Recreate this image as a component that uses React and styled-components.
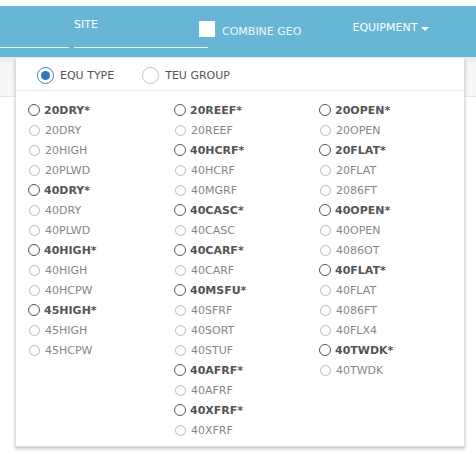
import React from "react"
import styled, { createGlobalStyle } from "styled-components"

const columns = [
  [
    "20DRY*", "20DRY", "20HIGH", "20PLWD", "40DRY*", "40DRY", "40PLWD",
    "40HIGH*", "40HIGH", "40HCPW", "45HIGH*", "45HIGH", "45HCPW",
  ],
  [
    "20REEF*", "20REEF", "40HCRF*", "40HCRF", "40MGRF", "40CASC*", "40CASC",
    "40CARF*", "40CARF", "40MSFU*", "40SFRF", "40SORT", "40STUF", "40AFRF*",
    "40AFRF", "40XFRF*", "40XFRF",
  ],
  [
    "20OPEN*", "20OPEN", "20FLAT*", "20FLAT", "2086FT", "40OPEN*", "40OPEN",
    "4086OT", "40FLAT*", "40FLAT", "4086FT", "40FLX4", "40TWDK*", "40TWDK",
  ],
]

const App = () => (
  <>
    <GlobalStyle />
    <Page>
      <TopBar>
        <Field width="69px" />
        <Field width="134px">
          <FieldLabel>SITE</FieldLabel>
        </Field>
        <CheckWrap>
          <CheckBox />
          <CheckLabel>COMBINE GEO</CheckLabel>
        </CheckWrap>
        <MenuTrigger>
          EQUIPMENT
          <Caret />
        </MenuTrigger>
      </TopBar>
      <SubStrip />

      <Dropdown>
        <ModeRow>
          <ModeOption>
            <BigRadio checked />
            EQU TYPE
          </ModeOption>
          <ModeOption>
            <BigRadio />
            TEU GROUP
          </ModeOption>
        </ModeRow>
        <TypeGrid>
          {columns.map((col, i) => (
            <Column key={i}>
              {col.map((name) => {
                const group = name.endsWith("*")
                return (
                  <Item key={name} group={group}>
                    <SmallRadio group={group} />
                    {name}
                  </Item>
                )
              })}
            </Column>
          ))}
        </TypeGrid>
      </Dropdown>
    </Page>
  </>
)
export default App

//styled-components
const GlobalStyle = createGlobalStyle`
  html, body {
    margin: 0;
    padding: 0;
    background: #fff;
  }
  body {
    font-family: "DejaVu Sans", Verdana, sans-serif;
    font-size: 11px;
  }
`
const Page = styled.div`
  position: relative;
  width: 476px;
  height: 454px;
  overflow: hidden;
  padding-top: 6px;
  box-sizing: border-box;
`
const TopBar = styled.div`
  display: flex;
  align-items: stretch;
  height: 51px;
  background: #68b6d6;
  box-shadow: 0 1px 1px rgba(0, 0, 0, 0.12);
  color: #fff;
`
const Field = styled.div`
  position: relative;
  width: ${(p) => p.width};
  margin-right: 5px;
  border-bottom: 1px solid #e9f5fb;
  margin-bottom: 9px;
  flex-shrink: 0;
`
const FieldLabel = styled.span`
  display: block;
  padding-top: 12px;
  line-height: 13px;
`
const CheckWrap = styled.div`
  display: flex;
  align-items: flex-start;
  gap: 7px;
  margin-left: -14px;
  padding-top: 15px;
`
const CheckBox = styled.span`
  width: 16px;
  height: 16px;
  background: #fff;
`
const CheckLabel = styled.span`
  color: #eef7fb;
  line-height: 13px;
  margin-top: 4px;
`
const MenuTrigger = styled.div`
  display: flex;
  align-items: flex-start;
  gap: 4px;
  margin-left: 51px;
  padding-top: 15px;
  line-height: 13px;
`
const Caret = styled.span`
  margin-top: 6px;
  width: 0;
  height: 0;
  border-left: 4px solid transparent;
  border-right: 4px solid transparent;
  border-top: 4px solid #fff;
`
const SubStrip = styled.div`
  height: 39px;
  background: linear-gradient(#e9e9e9, #f6f6f6 8px, #f8f8f8);
  border-bottom: 1px solid #e4e4e4;
`
const Dropdown = styled.div`
  position: absolute;
  left: 15px;
  top: 58px;
  width: 450px;
  height: 389px;
  box-sizing: border-box;
  background: #fff;
  border: 1px solid #dedede;
  border-top: none;
  box-shadow: 0 2px 3px rgba(0, 0, 0, 0.22);
`
const ModeRow = styled.div`
  display: flex;
  align-items: center;
  gap: 28px;
  height: 32px;
  padding: 0 0 0 21px;
  border-bottom: 1px solid #ececec;
`
const ModeOption = styled.label`
  display: flex;
  align-items: center;
  gap: 6px;
  color: #555;
  padding-top: 2px;
`
const BigRadio = styled.span`
  position: relative;
  width: 15px;
  height: 15px;
  border-radius: 50%;
  border: 1px solid ${(p) => (p.checked ? "#3d7fc0" : "#c4c4c4")};
  background: #fff;
  &::after {
    content: "";
    display: ${(p) => (p.checked ? "block" : "none")};
    position: absolute;
    left: 3px;
    top: 3px;
    width: 9px;
    height: 9px;
    border-radius: 50%;
    background: #2f78c0;
  }
`
const TypeGrid = styled.div`
  display: grid;
  grid-template-columns: 146px 145px 1fr;
  padding: 9px 0 0 12px;
`
const Column = styled.div`
  display: flex;
  flex-direction: column;
`
const Item = styled.div`
  display: flex;
  align-items: center;
  gap: 4px;
  height: 20px;
  color: ${(p) => (p.group ? "#555" : "#868686")};
  font-weight: ${(p) => (p.group ? "bold" : "normal")};
`
const SmallRadio = styled.span`
  box-sizing: border-box;
  width: ${(p) => (p.group ? "12px" : "11px")};
  height: ${(p) => (p.group ? "12px" : "11px")};
  margin-left: ${(p) => (p.group ? "0" : "1px")};
  margin-right: ${(p) => (p.group ? "0" : "1px")};
  border-radius: 50%;
  border: 1px solid ${(p) => (p.group ? "#555" : "#b9b9b9")};
  background: #fff;
`
